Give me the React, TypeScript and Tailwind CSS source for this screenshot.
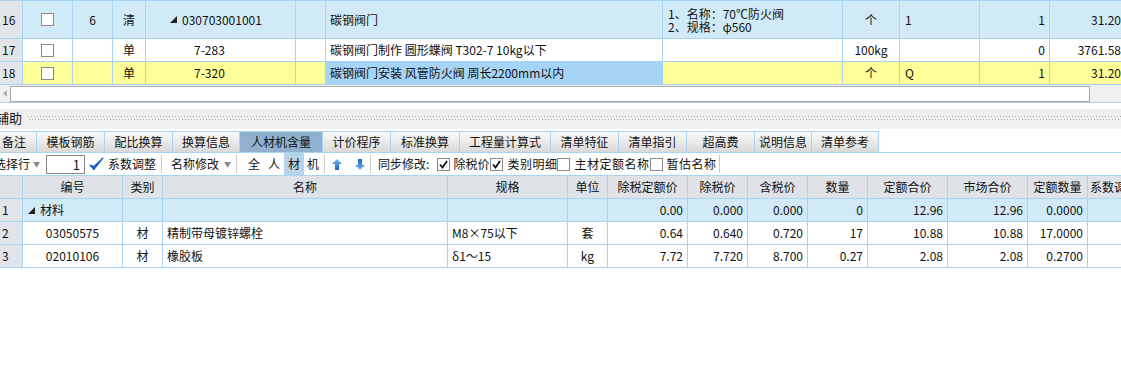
import React from 'react';

const FONT = { fontFamily: '"Noto Sans CJK SC", "Liberation Sans", sans-serif' };

const topCols = 'grid grid-cols-[23px_50px_40px_33px_150px_30px_337px_180px_57px_80px_70px_76px]';
const botCols = 'grid grid-cols-[23px_100px_40px_285px_120px_40px_80px_60px_60px_60px_80px_80px_60px_60px]';

const Box: React.FC<{ checked?: boolean }> = ({ checked }) => (
  <span className="inline-flex w-[13px] h-[13px] border border-[#8a8a8a] bg-white items-center justify-center shrink-0">
    {checked && (
      <svg width="9" height="9" viewBox="0 0 9 9">
        <path d="M1 4.5 L3.5 7.5 L8 1" stroke="#111" strokeWidth="1.8" fill="none" />
      </svg>
    )}
  </span>
);

const Tri = () => (
  <svg width="7" height="7" viewBox="0 0 7 7" className="inline-block mr-[5px]">
    <polygon points="7,0 7,7 0,7" fill="#222" />
  </svg>
);

const Arrow: React.FC<{ down?: boolean }> = ({ down }) => (
  <svg width="10" height="11" viewBox="0 0 10 11" style={{ transform: down ? 'rotate(180deg)' : undefined }}>
    <defs>
      <linearGradient id={down ? 'gd' : 'gu'} x1="0" y1="0" x2="0" y2="1">
        <stop offset="0" stopColor="#7fb6f0" />
        <stop offset="1" stopColor="#1d5fc4" />
      </linearGradient>
    </defs>
    <polygon points="5,0 10,5 7,5 7,11 3,11 3,5 0,5" fill={`url(#${down ? 'gd' : 'gu'})`} />
  </svg>
);

const Sep = () => <span className="w-px h-[18px] bg-[#c9c9c9] mx-[5px]" />;

const tabs = ['备注', '模板钢筋', '配比换算', '换算信息', '人材机含量', '计价程序', '标准换算', '工程量计算式', '清单特征', '清单指引', '超高费', '说明信息', '清单参考'];
const tabW = [37, 68, 68, 67, 83, 68, 69, 91, 68, 68, 68, 57, 67];

const c = 'border-r border-b border-[#a9d3f2] flex items-center overflow-hidden whitespace-nowrap';

const bottomRows = [
  { n: '1', code: '材料', group: true, t: '', name: '', spec: '', unit: '', a: '0.00', b: '0.000', cc: '0.000', q: '0', d: '12.96', e: '12.96', f: '0.0000' },
  { n: '2', code: '03050575', t: '材', name: '精制带母镀锌螺栓', spec: 'M8×75以下', unit: '套', a: '0.64', b: '0.640', cc: '0.720', q: '17', d: '10.88', e: '10.88', f: '17.0000' },
  { n: '3', code: '02010106', t: '材', name: '橡胶板', spec: 'δ1～15', unit: 'kg', a: '7.72', b: '7.720', cc: '8.700', q: '0.27', d: '2.08', e: '2.08', f: '0.2700' },
];

export default function App() {
  return (
    <div className="w-[1121px] h-[367px] overflow-hidden bg-white text-[12px] text-[#111] leading-none" style={FONT}>
      {/* upper grid */}
      <div className={`${topCols} w-[1125px] border-t border-[#a9d3f2]`}>
        {/* row 16 */}
        <div className={`${c} h-[38px] bg-[#e1e4e8] pl-[2px]`}>16</div>
        <div className={`${c} bg-[#d0ebf7] justify-center`}><Box /></div>
        <div className={`${c} bg-[#d0ebf7] justify-center`}>6</div>
        <div className={`${c} bg-[#d0ebf7] justify-center`}>清</div>
        <div className={`${c} bg-[#d0ebf7] pl-[24px]`}><Tri />030703001001</div>
        <div className={`${c} bg-[#d0ebf7]`} />
        <div className={`${c} bg-[#d0ebf7] pl-[4px]`}>碳钢阀门</div>
        <div className={`${c} bg-[#d0ebf7] pl-[5px] flex-col !items-start justify-center leading-[13px]`}>
          <span>1、名称：70℃防火阀</span>
          <span>2、规格：φ560</span>
        </div>
        <div className={`${c} bg-[#d0ebf7] justify-center`}>个</div>
        <div className={`${c} bg-[#d0ebf7] pl-[5px]`}>1</div>
        <div className={`${c} bg-[#d0ebf7] justify-end pr-[4px]`}>1</div>
        <div className={`${c} bg-[#d0ebf7] justify-end pr-[4px]`}>31.20</div>
        {/* row 17 */}
        <div className={`${c} h-[23px] bg-[#e1e4e8] pl-[2px]`}>17</div>
        <div className={`${c} justify-center`}><Box /></div>
        <div className={c} />
        <div className={`${c} justify-center`}>单</div>
        <div className={`${c} pl-[48px]`}>7-283</div>
        <div className={c} />
        <div className={`${c} pl-[4px]`}>碳钢阀门制作 圆形蝶阀 T302-7 10kg以下</div>
        <div className={c} />
        <div className={`${c} justify-center`}>100kg</div>
        <div className={c} />
        <div className={`${c} justify-end pr-[4px]`}>0</div>
        <div className={`${c} justify-end pr-[4px]`}>3761.58</div>
        {/* row 18 */}
        <div className={`${c} h-[23px] bg-[#e1e4e8] pl-[2px]`}>18</div>
        <div className={`${c} bg-[#ffff99] justify-center`}><Box /></div>
        <div className={`${c} bg-[#ffff99]`} />
        <div className={`${c} bg-[#ffff99] justify-center`}>单</div>
        <div className={`${c} bg-[#ffff99] pl-[48px]`}>7-320</div>
        <div className={`${c} bg-[#ffff99]`} />
        <div className={`${c} bg-[#a6d4f7] pl-[4px]`}>碳钢阀门安装 风管防火阀 周长2200mm以内</div>
        <div className={`${c} bg-[#ffff99]`} />
        <div className={`${c} bg-[#ffff99] justify-center`}>个</div>
        <div className={`${c} bg-[#ffff99] pl-[5px]`}>Q</div>
        <div className={`${c} bg-[#ffff99] justify-end pr-[4px]`}>1</div>
        <div className={`${c} bg-[#ffff99] justify-end pr-[4px]`}>31.20</div>
      </div>

      {/* horizontal scrollbar */}
      <div className="flex h-[18px] items-center bg-[#f0f0f0] border-b border-[#a9d3f2]">
        <div className="w-[10px] h-full flex items-center justify-center">
          <svg width="4" height="7" viewBox="0 0 4 7"><polygon points="4,0 4,7 0,3.5" fill="#b0b0b0" /></svg>
        </div>
        <div className="w-[1080px] h-[16px] bg-white border border-[#a8a8a8]" />
      </div>

      {/* 辅助 header */}
      <div className="mt-[6px] h-[20px] bg-[#f0f0f0] flex items-center">
        <span className="-ml-[4px] text-[13px] -mt-[3px]">辅助</span>
        <div className="flex-1 ml-[6px] -mt-[2px] flex flex-col gap-[2px]">
          <div className="h-px bg-[repeating-linear-gradient(90deg,#a8a8a8_0_1px,transparent_1px_3px)]" />
          <div className="h-px bg-[repeating-linear-gradient(90deg,transparent_0_1px,#a8a8a8_1px_2px,transparent_2px_3px)]" />
        </div>
      </div>

      {/* tabs */}
      <div className="mt-[2px] flex h-[22px] border-b border-[#a9d3f2]">
        {tabs.map((t, i) => (
          <div
            key={t}
            style={{ width: tabW[i] }}
            className={`shrink-0 flex items-center justify-center border-r border-t border-[#a9d3f2] text-[12px] ${
              t === '人材机含量' ? 'bg-[#8fb1cd]' : 'bg-[linear-gradient(#fbfbfb,#d9d9d9)]'
            } ${i === 0 ? 'pr-[8px]' : ''}`}
          >
            {t}
          </div>
        ))}
      </div>

      {/* toolbar */}
      <div className="flex h-[23px] items-center border-b border-[#a9d3f2] whitespace-nowrap">
        <span className="-ml-[6px]">选择行</span>
        <span className="ml-[3px] text-[7px] text-[#888]">▼</span>
        <div className="ml-[6px] w-[39px] h-[19px] border border-[#8a8a8a] bg-white flex items-center justify-end pr-[4px] text-[13px]">1</div>
        <svg width="15" height="14" viewBox="0 0 15 14" className="ml-[4px]">
          <path d="M1 8 L5 12.5 L14 1 L5 9.5 Z" fill="#1b5fb8" stroke="#1b5fb8" strokeWidth="1.2" strokeLinejoin="round" />
        </svg>
        <span className="ml-[4px]">系数调整</span>
        <Sep />
        <span className="ml-[4px]">名称修改</span>
        <span className="ml-[5px] text-[7px] text-[#888]">▼</span>
        <Sep />
        <span className="ml-[6px]">全</span>
        <span className="ml-[8px]">人</span>
        <span className="ml-[4px] h-full px-[4px] bg-[#b9d3e8] flex items-center">材</span>
        <span className="ml-[3px]">机</span>
        <Sep />
        <span className="ml-[2px] flex"><Arrow /></span>
        <span className="ml-[13px] flex"><Arrow down /></span>
        <Sep />
        <span className="ml-[2px]">同步修改:</span>
        <span className="ml-[8px] flex"><Box checked /></span>
        <span className="ml-[3px]">除税价</span>
        <span className="ml-px flex"><Box checked /></span>
        <span className="ml-[4px] tracking-[0.5px]">类别明细</span>
        <span className="flex"><Box /></span>
        <span className="ml-[4px] tracking-[0.5px]">主材定额名称</span>
        <span className="flex"><Box /></span>
        <span className="ml-[4px] tracking-[0.5px]">暂估名称</span>
        <span className="w-px h-[18px] bg-[#c9c9c9] ml-[2px]" />
      </div>

      {/* lower grid */}
      <div className={`${botCols} w-[1148px]`}>
        {['', '编号', '类别', '名称', '规格', '单位', '除税定额价', '除税价', '含税价', '数量', '定额合价', '市场合价', '定额数量', '系数调'].map((h, i) => (
          <div key={i} className={`${c} h-[23px] bg-[#dfe3e8] justify-center ${i === 13 ? '!justify-start pl-[2px]' : ''}`}>{h}</div>
        ))}
        {bottomRows.map(r => {
          const bg = r.group ? 'bg-[#d0ebf7]' : 'bg-white';
          return (
            <React.Fragment key={r.n}>
              <div className={`${c} h-[23px] bg-[#e1e4e8] pl-[2px]`}>{r.n}</div>
              {r.group ? (
                <div className={`${c} ${bg} pl-[5px]`}><Tri />{r.code}</div>
              ) : (
                <div className={`${c} ${bg} justify-center`}>{r.code}</div>
              )}
              <div className={`${c} ${bg} justify-center`}>{r.t}</div>
              <div className={`${c} ${bg} pl-[4px]`}>{r.name}</div>
              <div className={`${c} ${bg} pl-[4px]`}>{r.spec}</div>
              <div className={`${c} ${bg} justify-center`}>{r.unit}</div>
              {[r.a, r.b, r.cc, r.q, r.d, r.e, r.f].map((v, i) => (
                <div key={i} className={`${c} ${bg} justify-end pr-[4px]`}>{v}</div>
              ))}
              <div className={`${c} ${bg}`} />
            </React.Fragment>
          );
        })}
      </div>
    </div>
  );
}
